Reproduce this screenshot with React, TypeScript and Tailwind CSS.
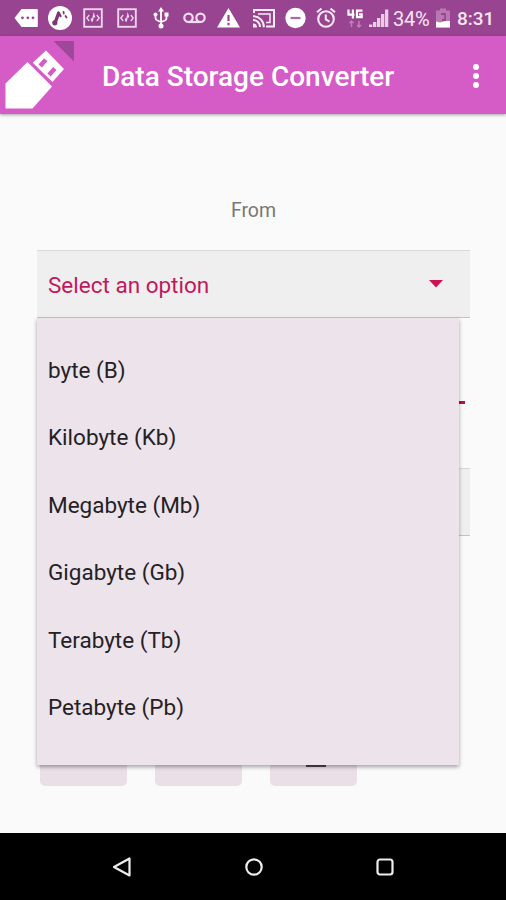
import React, { useState } from 'react';

const units = [
    'byte (B)',
    'Kilobyte (Kb)',
    'Megabyte (Mb)',
    'Gigabyte (Gb)',
    'Terabyte (Tb)',
    'Petabyte (Pb)',
];

function CodeIcon() {
    return (
        <svg width="20" height="24" viewBox="0 0 20 24" fill="none" stroke="#f0d5ed" strokeWidth="1.9">
            <rect x="1.2" y="3.2" width="17.6" height="17.6" />
            <path d="M6.2 9 3.8 12l2.400 3M13.800 9l2.400 3-2.400 3M8.300 12.500l.8 3L10.800 8.500l.9 3" strokeWidth="1.300" />
        </svg>
    );
}

function StatusBar() {
    return (
        <div className="flex h-9 items-center bg-[#994490] pl-3.5 text-[#f8e8f6]">
            {/* message */}
            <svg width="24" height="24" viewBox="0 0 24 24">
                <path d="M8 3.8H23V20.2H8L1.5 12z" fill="#fff" stroke="#fff" strokeWidth="1.6" strokeLinejoin="round" />
                <g fill="#994490">
                    <circle cx="8.5" cy="11.8" r="1.4" />
                    <circle cx="13.8" cy="11.8" r="1.4" />
                    <circle cx="19" cy="11.8" r="1.4" />
                </g>
            </svg>
            {/* music */}
            <svg className="ml-2.5" width="24" height="24" viewBox="0 0 24 24" stroke="#7d3478" strokeLinecap="round">
                <circle cx="12" cy="12" r="12" fill="#fff" stroke="none" />
                <path d="M7.2 16.5 10.5 7.5" strokeWidth="3.4" />
                <path d="M10.5 6.5 12.5 10" strokeWidth="2.4" />
                <path d="M15.5 6l.3 1.5M17.5 10l1 1.5" strokeWidth="1.8" />
                <circle cx="6.8" cy="16.8" r="2.6" fill="#7d3478" stroke="none" />
            </svg>
            <div className="ml-[11px] flex gap-3.5">
                <CodeIcon />
                <CodeIcon />
            </div>
            {/* usb */}
            <svg className="ml-4" width="16" height="24" viewBox="0 0 16 24" fill="none" stroke="#fff" strokeWidth="1.8">
                <path d="M8 4v15M2.5 8.5V12q0 2 2 2.5L8 16l4-1.5q1.5-.5 1.5-2.5V8.5" />
                <path d="M8 1l3 4.5H5z" fill="#fff" stroke="none" />
                <circle cx="8" cy="20" r="2.5" fill="#fff" stroke="none" />
                <circle cx="2.5" cy="8.5" r="2" fill="#fff" stroke="none" />
                <path d="M11.5 6.5h4v4h-4z" fill="#fff" stroke="none" />
            </svg>
            {/* voicemail */}
            <svg className="ml-3.5" width="23" height="24" viewBox="0 0 23 24" fill="none" stroke="#f3dcf0" strokeWidth="2.2">
                <circle cx="5.5" cy="11.8" r="4.2" />
                <circle cx="17.5" cy="11.8" r="4.2" />
                <path d="M5.5 16h12" />
            </svg>
            {/* warning */}
            <svg className="ml-[11px]" width="23" height="24" viewBox="0 0 23 24">
                <path d="M11.5 2 23 21.5H0z" fill="#fff" />
                <path d="M11.5 9v6M11.5 16.8v2.4" stroke="#994490" strokeWidth="2.2" />
            </svg>
            {/* cast */}
            <svg className="ml-3" width="24" height="24" viewBox="0 0 24 24" fill="none" stroke="#fbeefa" strokeWidth="2">
                <path d="M2 7V4h20v16.5h-8" />
                <path d="M6 8h12v8.5h-4" strokeWidth="1.4" />
                <path d="M1 10.2a10.6 10.6 0 0 1 10.8 11M1 14a6.8 6.8 0 0 1 7 7" />
                <path d="M1 17.500a4 4 0 0 1 4 4H1z" fill="#fbeefa" stroke="none" />
            </svg>
            {/* do not disturb */}
            <svg className="ml-[9px]" width="21" height="24" viewBox="0 0 21 24">
                <circle cx="10.5" cy="12" r="10.2" fill="#fff" />
                <path d="M5.5 12h10" stroke="#a86ba2" strokeWidth="2.2" />
            </svg>
            {/* alarm */}
            <svg className="ml-2.5" width="20" height="24" viewBox="0 0 20 24" fill="none" stroke="#f8e8f6" strokeWidth="2.1">
                <circle cx="10" cy="13" r="7.8" />
                <path d="M9.8 8.5v5l3.7 2.2M1 6.3 5.5 2.5M19 6.3 14.5 2.5" />
            </svg>
            {/* 4G data */}
            <svg className="ml-[11px]" width="16" height="24" viewBox="0 0 16 24" fill="none" stroke="#fff" strokeWidth="2.2">
                <path d="M1.5 3.5v5.2h6M5.9 3.5v9M15.5 4.6H10v6.6h4.7V8.3H12" />
                <path d="M4.5 15v6M2.5 17l2-2 2 2M12 15v6M10 19l2 2 2-2" stroke="#bd82b6" strokeWidth="1.5" />
            </svg>
            {/* signal */}
            <svg className="ml-1.5" width="20" height="24" viewBox="0 0 20 24" fill="#e9cde6">
                <path d="M0 18.500h3.300V21H0zM4 16h3.300v5H4zM8 12h3.300v9H8zM12 8h3.300v13H12zM16 3.500h3.300V21H16z" />
            </svg>
            <span className="ml-1 w-[38px] pt-0.5 text-[20px] tracking-[-0.2px]">34%</span>
            {/* battery */}
            <svg className="ml-[5px]" width="14" height="24" viewBox="0 0 14 24">
                <path d="M4 2.5h6v2h4v17H0v-17h4z" fill="#b978b2" />
                <path d="M5 8h4v6H6" fill="none" stroke="#994490" strokeWidth="1.8" />
                <path d="M0 15.5l4 1 5-1.5h5v6.5H0z" fill="#fff" />
            </svg>
            <span className="ml-[7px] pt-0.5 text-[19px] font-medium">8:31</span>
        </div>
    );
}

function AppBar() {
    return (
        <header className="relative z-10 flex h-[78px] items-center bg-[#d55cc7] shadow-[0_1px_3px_rgba(0,0,0,0.35)]">
            {/* flash drive logo */}
            <svg width="80" height="78" viewBox="0 0 80 78">
                <path d="M53.5 5H74v20.5z" fill="#9f4798" />
                <path d="M5.5 47.5 27.5 26 52 50.5 32.5 72.5h-27z" fill="#fff" />
                <path d="M46 14.5 64 33 52.500 46 32.500 27z" fill="#fff" />
                <path d="M30.5 25.5 53 48.5" stroke="#d55cc7" strokeWidth="1.6" />
                <path d="M40.2 30 45.8 23.800M49 39 54.800 32.600" stroke="#d55cc7" strokeWidth="4.500" />
            </svg>
            <h1 className="ml-[22px] pt-1 text-[28px] leading-none font-medium whitespace-nowrap text-white">
                Data Storage Converter
            </h1>
            <button className="mt-px mr-[27px] ml-auto flex flex-col gap-[3px]" title="More options">
                <span className="size-[6px] rounded-full bg-white" />
                <span className="size-[6px] rounded-full bg-white" />
                <span className="size-[6px] rounded-full bg-white" />
            </button>
        </header>
    );
}

export default function App() {
    const [open, setOpen] = useState(true);
    const [selected, setSelected] = useState('Select an option');

    const handleSelect = (unit: string) => {
        setSelected(unit);
        setOpen(false);
    };

    return (
        <div className="flex h-[900px] w-[506px] flex-col overflow-hidden bg-[#fafafa] font-[Roboto,sans-serif]">
            <StatusBar />
            <AppBar />

            <main className="flex flex-1 flex-col pr-9 pl-[37px]">
                <p className="mt-[85px] text-center text-[19.5px] leading-6 text-[#777]">From</p>

                <div className="relative mt-[27px]">
                    <button
                        onClick={() => setOpen(!open)}
                        className="flex h-[68px] w-full items-center justify-between border-y border-t-[#d8d8d8] border-b-[#c4c4c4] bg-[#efefef] pr-[27px] pl-[11px] text-[22.5px] text-[#c2185b]"
                    >
                        <span className="pt-[3px]">{selected}</span>
                        <svg width="14" height="8" viewBox="0 0 14 8">
                            <path d="M0 0h14L7 7.5z" fill="#d0104f" />
                        </svg>
                    </button>

                    {open && (
                        <ul className="absolute top-full left-0 z-10 h-[447px] w-[422px] bg-[#ede3eb] pt-[19px] shadow-[0_2px_4px_rgba(0,0,0,0.35)]">
                            {units.map((unit) => (
                                <li
                                    key={unit}
                                    onClick={() => handleSelect(unit)}
                                    className="flex h-[67.5px] items-center pl-[11px] text-[22.5px] text-[#242125]"
                                >
                                    {unit}
                                </li>
                            ))}
                        </ul>
                    )}
                </div>

                {/* amount field */}
                <div className="mt-[83px] mr-[5px] h-[3px] bg-[#b80f45]" />

                <div className="mt-16 h-[68px] border-y border-t-[#d8d8d8] border-b-[#c4c4c4] bg-[#efefef]" />

                <div className="mt-[182px] ml-[3px] flex gap-7">
                    <button className="h-[68px] w-[87px] rounded-[5px] bg-[#eadfe7]" />
                    <button className="h-[68px] w-[87px] rounded-[5px] bg-[#eadfe7]" />
                    <button className="flex h-[68px] w-[87px] items-end justify-center rounded-[5px] bg-[#eadfe7] pb-[19px] pl-1">
                        <span className="h-[3px] w-5 bg-[#50434d]" />
                    </button>
                </div>
            </main>

            <nav className="flex h-[67px] items-center justify-between bg-black px-[112px]">
                <svg width="20" height="22" viewBox="0 0 20 22" fill="none" stroke="#eee" strokeWidth="2.2" strokeLinejoin="round">
                    <path d="M17.5 2.5v17L2 11z" />
                </svg>
                <svg width="20" height="20" viewBox="0 0 20 20" fill="none" stroke="#eee" strokeWidth="2.2">
                    <circle cx="10" cy="10" r="7.7" />
                </svg>
                <svg width="18" height="18" viewBox="0 0 18 18" fill="none" stroke="#eee" strokeWidth="2.2">
                    <rect x="1.5" y="1.5" width="15" height="15" rx="2.5" />
                </svg>
            </nav>
        </div>
    );
}
